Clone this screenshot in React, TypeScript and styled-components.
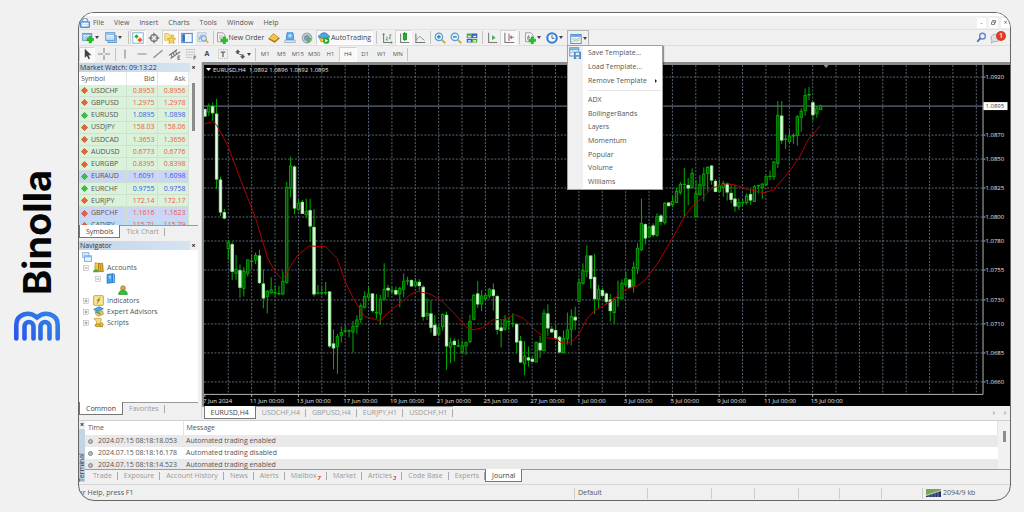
import React from "react";
import styled, { createGlobalStyle, css } from "styled-components";

const UI_FONT = '"Open Sans", "Noto Sans", sans-serif';

const GlobalStyle = createGlobalStyle`
  * { box-sizing: border-box; }
  body { margin: 0; background: #f1f1f1; font-family: ${UI_FONT}; font-size: 7px; line-height: 10px; color: #555; }
  button, input { font: inherit; color: inherit; }
  button { margin: 0; padding: 0; border: 0; background: none; }
  table { border-collapse: collapse; border-spacing: 0; }
  ul { list-style: none; margin: 0; padding: 0; }
`;

/* ---------- page ---------- */

const Page = styled.div`
  display: flex;
  min-height: 100vh;
  padding: 12px 13px 11px 0;
`;

const Rail = styled.aside`
  flex: 0 0 78px;
  display: flex;
  flex-direction: column;
  align-items: center;
  gap: 15px;
  padding: 158px 4px 0 0;
`;

const BrandName = styled.div`
  writing-mode: vertical-rl;
  transform: rotate(180deg);
  font-family: Inter, "Liberation Sans", sans-serif;
  font-weight: 700;
  font-size: 38px;
  line-height: 48px;
  color: #050505;
`;

const Window = styled.main`
  flex: 1;
  min-width: 0;
  display: flex;
  flex-direction: column;
  border: 1px solid #666;
  border-radius: 16px;
  background: #f0f0f0;
  overflow: hidden;
`;

/* ---------- menu bar ---------- */

const MenuBar = styled.nav`
  display: flex;
  align-items: center;
  height: 17px;
  padding-left: 1px;
  border-top: 3px solid #fff;
  border-bottom: 1px solid #e2e2e2;
`;

const MenuItems = styled.div`
  display: flex;
  gap: 10px;
  flex: 1;
  padding-left: 3px;
`;

const WindowControls = styled.div`
  display: flex;
  gap: 3px;
`;

const WindowButton = styled.button`
  width: 9px;
  height: 10px;
  background: #fff;
  color: #667;
  font-size: 7px;
  line-height: 9px;
`;

/* ---------- toolbars ---------- */

const ToolBar = styled.div`
  display: flex;
  align-items: center;
  height: 16px;
  &:first-of-type { border-bottom: 1px solid #dedede; }
`;

const ToolButton = styled.button<{ $w?: number; $pressed?: boolean }>`
  flex: none;
  display: flex;
  align-items: center;
  justify-content: center;
  gap: 1px;
  width: ${(p) => p.$w ?? 16}px;
  height: 15px;
  color: #444;
  white-space: nowrap;
  ${(p) =>
    p.$pressed &&
    css`
      background: #f9f9f9;
      border: 1px solid #d4d4d4;
      border-right-color: #fff;
      border-bottom-color: #fff;
    `}
`;

const ToolGap = styled.span<{ $w?: number; $line?: boolean }>`
  flex: none;
  width: ${(p) => p.$w ?? 4}px;
  height: 13px;
  background: ${(p) => (p.$line ? "linear-gradient(#c4c4c4, #c4c4c4) center / 1px 100% no-repeat" : "none")};
`;

const Periods = styled.div`
  display: flex;
  width: 149px;
`;

const PeriodButton = styled.button<{ $pressed?: boolean }>`
  flex: 1;
  height: 15px;
  font-size: 6px;
  color: #555;
  ${(p) =>
    p.$pressed &&
    css`
      background: #f9f9f9;
      border: 1px solid #d0d0d0;
      border-right-color: #fff;
      border-bottom-color: #fff;
    `}
`;

const Spacer = styled.span`
  flex: 1;
`;

const MenuAnchor = styled.div`
  position: relative;
  align-self: stretch;
  border: 1px solid #b5b5b5;
  border-bottom: 0;
`;

const DropMenu = styled.div`
  position: absolute;
  z-index: 2;
  top: 14px;
  left: -1px;
  width: 96px;
  height: 145px;
  border: 1px solid #a0a0a0;
  background: linear-gradient(90deg, #f0f0f0 15px, #fff 15px);
  box-shadow: 1px 1px 1px rgba(0, 0, 0, 0.4);
`;

const MenuGroup = styled.div<{ $h: number }>`
  display: flex;
  flex-direction: column;
  height: ${(p) => p.$h}px;
`;

const MenuRow = styled.button`
  flex: 1;
  display: flex;
  align-items: center;
  padding-right: 5px;
  text-align: left;
`;

const MenuIcon = styled.span`
  display: flex;
  width: 20px;
  padding-left: 1px;
`;

const MenuLabel = styled.span`
  flex: 1;
`;

const MenuRule = styled.hr`
  height: 1px;
  margin: 2px 1px 2px 20px;
  border: 0;
  background: #e4e4e4;
`;

/* ---------- work area ---------- */

const Work = styled.div`
  flex: 1;
  display: flex;
  min-height: 357px;
`;

const SidePanels = styled.div`
  flex: 0 0 122px;
  display: flex;
  flex-direction: column;
  padding: 1px 3px 0 0;
  border-right: 1px solid #d8d8d8;
`;

const Panel = styled.section<{ $grow?: boolean }>`
  display: flex;
  flex-direction: column;
  ${(p) => p.$grow && "flex: 1;"}
`;

const PanelTitle = styled.header`
  display: flex;
  height: 9px;
  line-height: 9px;
  font-size: 7px;
  color: #333;
`;

const PanelName = styled.h2`
  flex: 1;
  margin: 0;
  padding-left: 1px;
  font: inherit;
  background: linear-gradient(90deg, #c2d4e5, #d6e4f1);
`;

const PanelClose = styled.button`
  width: 8px;
  line-height: 8px;
  font-size: 7px;
  font-weight: 700;
  color: #222;
`;

const WatchBody = styled.div`
  display: flex;
  height: 153px;
  overflow: hidden;
  background: #f3f3f3;
`;

const WatchTable = styled.table`
  width: 109px;
  height: 160px;
  flex: none;
  table-layout: fixed;
  background: #fff;
`;

const WatchHead = styled.th<{ $w: number; $right?: boolean }>`
  width: ${(p) => p.$w}px;
  height: 13px;
  padding: 0 2px;
  font-weight: 400;
  text-align: ${(p) => (p.$right ? "right" : "left")};
  border-right: 1px solid #e6e6e6;
`;

const rowTint = { green: "#d9f2d9", blue: "#ccd5f5", sky: "#b9dcf7" };

const WatchRow = styled.tr<{ $tint: keyof typeof rowTint }>`
  background: ${(p) => rowTint[p.$tint]};
  border-bottom: 1px solid #cfe0d0;
`;

const WatchCell = styled.td<{ $tone?: "up" | "down" }>`
  padding: 0 2px;
  line-height: 10px;
  white-space: nowrap;
  border-right: 1px solid #cfe3d0;
  ${(p) =>
    p.$tone &&
    css`
      text-align: right;
      color: ${p.$tone === "up" ? "#3d55f0" : "#ee5a45"};
    `}
`;

const SymbolCell = styled.span`
  display: flex;
  align-items: center;
  gap: 3px;
`;

const ScrollTrack = styled.div<{ $w: number; $top: number }>`
  flex: 0 0 ${(p) => p.$w}px;
  display: flex;
  justify-content: center;
  align-items: flex-start;
  padding-top: ${(p) => p.$top}px;
  background: #f1f1f1;
`;

const ScrollThumb = styled.div<{ $h: number }>`
  width: 3px;
  height: ${(p) => p.$h}px;
  background: #8c8c8c;
`;

const TabStrip = styled.div<{ $inset?: number; $h: number }>`
  display: flex;
  align-items: flex-start;
  height: ${(p) => p.$h}px;
  padding-left: ${(p) => p.$inset ?? 0}px;
  border-top: 1px solid #9a9a9a;
`;

const Tab = styled.button<{ $active?: boolean }>`
  display: flex;
  align-items: center;
  height: 13px;
  margin-top: -1px;
  padding: 1px 6px 0;
  color: #999;
  white-space: nowrap;
  &::after {
    content: "";
    width: 1px;
    height: 8px;
    margin-right: -6px;
    margin-left: 5px;
    background: #aaa;
  }
  ${(p) =>
    p.$active &&
    css`
      background: #fff;
      color: #444;
      border: 1px solid #777;
      border-top: 0;
      &::after {
        display: none;
      }
    `}
`;

const Unread = styled.sub`
  align-self: flex-end;
  margin-left: 1px;
  font-size: 6px;
  line-height: 8px;
  font-style: italic;
  font-weight: 700;
  color: #f04040;
`;

const TreeBody = styled.div`
  flex: 1;
  padding: 1px 3px 0;
  background: #fff;
`;

const TreeRow = styled.li<{ $indent: number }>`
  display: flex;
  align-items: center;
  gap: 3px;
  height: 11px;
  padding-left: ${(p) => p.$indent}px;
`;

/* ---------- chart ---------- */

const ChartPane = styled.section`
  flex: 1;
  min-width: 0;
  display: flex;
  flex-direction: column;
`;

const ChartFrame = styled.div`
  flex: 1;
  display: flex;
  border-top: 3px solid #8a8a8a;
  border-left: 2px solid #8a8a8a;
  background: #000;
`;

const ChartSvg = styled.svg`
  display: block;
  width: 100%;
  height: 100%;
  font-family: ${UI_FONT};
  font-size: 6px;
`;

const ChartTabs = styled.div`
  display: flex;
  align-items: center;
  justify-content: space-between;
  height: 13px;
  padding-right: 2px;
`;

const TabArrows = styled.div`
  display: flex;
  gap: 9px;
  padding-right: 2px;
`;

/* ---------- terminal ---------- */

const Terminal = styled.section`
  display: flex;
  height: 64px;
  margin-top: 1px;
  border-top: 1px solid #d0d0d0;
`;

const TerminalHandle = styled.div`
  flex: 0 0 6px;
  width: 6px;
  display: flex;
  flex-direction: column;
`;

const HandleClose = styled(PanelClose)`
  width: 6px;
`;

const TerminalTitle = styled.h2`
  flex: 1;
  margin: 0 0 2px;
  font: inherit;
  line-height: 6px;
  color: #333;
  writing-mode: vertical-rl;
  transform: rotate(180deg);
  background: #c2d4e5;
`;

const TerminalMain = styled.div`
  flex: 1;
  min-width: 0;
  display: flex;
  flex-direction: column;
`;

const LogView = styled.div`
  display: flex;
  height: 48px;
  overflow: hidden;
`;

const LogTable = styled.table`
  flex: 1;
  table-layout: fixed;
  height: 50px;
  background: #fff;
`;

const LogHead = styled.th<{ $w?: number }>`
  height: 14px;
  padding: 0 3px;
  font-weight: 400;
  text-align: left;
  ${(p) => p.$w && `width: ${p.$w}px;`}
  border-right: 1px solid #e4e4e4;
`;

const LogRow = styled.tr`
  height: 12px;
  &:nth-child(odd) { background: #e9e9e9; }
`;

const LogCell = styled.td`
  padding: 0 3px;
  white-space: nowrap;
`;

const LogTime = styled.span`
  display: flex;
  align-items: center;
  gap: 5px;
`;

const Dot = styled.i`
  width: 5px;
  height: 5px;
  border: 1px solid #888;
  border-radius: 50%;
  background: #bbb;
`;

/* ---------- status bar ---------- */

const StatusBar = styled.footer`
  display: flex;
  align-items: center;
  height: 16px;
  padding-top: 1px;
  border-top: 1px solid #d4d4d4;
`;

const StatusHelp = styled.span`
  flex: 1;
  text-indent: -4px;
`;

const StatusCell = styled.span<{ $w: number }>`
  flex: 0 0 ${(p) => p.$w}px;
  display: flex;
  align-items: center;
  gap: 2px;
  height: 11px;
  padding-left: 3px;
  border-left: 1px solid #ccc;
`;

/* ---------- icons ---------- */

const Svg = ({ s = 12, children }: { s?: number; children: React.ReactNode }) => (
  <svg width={s} height={s} viewBox="0 0 16 16" fill="none" aria-hidden="true">
    {children}
  </svg>
);

const Caret = () => (
  <svg width="4" height="3" viewBox="0 0 4 3" aria-hidden="true">
    <path d="M0 0h4L2 3z" fill="#444" />
  </svg>
);

const Plus = ({ x = 0, y = 0 }: { x?: number; y?: number }) => (
  <path transform={`translate(${x} ${y})`} d="M3 0h3v3h3v3H6v3H3V6H0V3h3z" fill="#22c822" stroke="#12a012" strokeWidth=".8" />
);

const icons: Record<string, React.ReactNode> = {
  app: (
    <>
      <path d="M4 7V4a4 4 0 0 1 8 0v3" stroke="#79a7de" strokeWidth="2" />
      <rect x="1" y="6" width="14" height="9" rx="1" fill="#cfe2f7" stroke="#4d8ad0" strokeWidth="2" />
      <path d="M4 9h8M4 12h5" stroke="#fff" strokeWidth="1.500" />
    </>
  ),
  newChart: (
    <>
      <rect x="1" y="2" width="12" height="9" fill="#d3e6f7" stroke="#5d97cf" strokeWidth="1.400" />
      <path d="M2 3h10" stroke="#6ea7dc" strokeWidth="1.500" />
      <path d="M3 9l3-3 2 2 3-2" stroke="#5d93c8" />
      <Plus x={6.5} y={5.5} />
    </>
  ),
  profiles: (
    <>
      <rect x="4" y="5" width="11" height="9" fill="#a9cdf0" stroke="#5a93cb" strokeWidth="1.200" />
      <rect x="1" y="1" width="12" height="10" fill="#e1effb" stroke="#5a95d0" strokeWidth="1.400" />
      <path d="M2 3h10" stroke="#8cb9e6" strokeWidth="2" />
      <path d="M3 6.500h8M3 8.500h8" stroke="#b3cfea" />
    </>
  ),
  watch: (
    <>
      <rect x="1" y="1" width="14" height="14" fill="#fff" stroke="#8ab6df" strokeWidth="1.400" />
      <path d="M6 3l3 3-3 3-3-3z" fill="#24b32a" />
      <path d="M10.500 7l3.500 3.500-3.500 3.500L7 10.500z" fill="#ee5a36" />
    </>
  ),
  target: (
    <>
      <circle cx="8" cy="8" r="4.500" stroke="#777" strokeWidth="1.800" />
      <path d="M8 1v5M8 10v5M1 8h5M10 8h5" stroke="#777" strokeWidth="1.800" />
    </>
  ),
  navigator: (
    <>
      <path d="M1 2h5l1 2h6v7H1z" fill="#f9e48b" stroke="#dab543" />
      <path d="M10 5l1.700 3.500 4 .500-3 2.600.800 3.900L10 13.600 6.500 15.500l.800-3.900-3-2.600 4-.500z" fill="#fbd549" stroke="#c3951a" strokeWidth=".8" />
    </>
  ),
  terminal: (
    <>
      <rect x="1" y="2" width="14" height="12" fill="#f7fbff" stroke="#5a93cc" strokeWidth="1.600" />
      <path d="M3.500 3v10" stroke="#2f6fb5" strokeWidth="3.500" />
      <path d="M7 6h6M7 9h6" stroke="#dfe9f3" />
    </>
  ),
  tester: (
    <>
      <rect x="1" y="1" width="11" height="12" fill="#dbe9f6" stroke="#a9bed5" />
      <path d="M3 11V6M5 9V4M7 11V3M9 8V4" stroke="#8396ab" />
      <circle cx="9" cy="8.500" r="3.500" fill="#cfe6f8" stroke="#6f98c0" strokeWidth="1.300" />
      <path d="M12 11l3 3.500" stroke="#e0aa3d" strokeWidth="2" />
    </>
  ),
  order: (
    <>
      <path d="M2 1h7l3 3v9H2z" fill="#f6f6f6" stroke="#888" />
      <path d="M4 5h5M4 7h5M4 9h3" stroke="#aaa" />
      <Plus x={6.5} y={6.5} />
    </>
  ),
  book: (
    <>
      <path d="M1 9l6-7 8 6-6 6z" fill="#f1c54c" stroke="#bb8524" />
      <path d="M1 9l8 4 6-5" stroke="#a9741a" strokeWidth="1.500" />
    </>
  ),
  server: (
    <>
      <path d="M4 1h8l1 9H3z" fill="#5db0f0" stroke="#2f7fcb" />
      <path d="M6 3h4v4H6z" fill="#b3e0ff" />
      <path d="M1 11h14v3H1z" fill="#e0e7ef" stroke="#8fa5bd" />
    </>
  ),
  signal: (
    <>
      <circle cx="8" cy="8" r="6.500" fill="#c9d0d6" stroke="#9aa3aa" strokeWidth="1.400" />
      <circle cx="8" cy="8" r="3.500" fill="#7c9fba" stroke="#6f8da3" />
      <path d="M8 8l6 0-2 5-4 2z" fill="#58b558" />
    </>
  ),
  auto: (
    <>
      <path d="M1 6c4 4 9 4 14 0l-3 7H4z" fill="#f3cf3c" stroke="#b78d14" />
      <path d="M0 6c3-2 4-5 8-5s5 3 8 5c-5 3-11 3-16 0z" fill="#52a5dd" stroke="#2c79b3" />
      <circle cx="11" cy="11.500" r="4.200" fill="#23ab34" />
      <path d="M9.500 9.300l4 2.200-4 2.200z" fill="#fff" />
    </>
  ),
  bars: (
    <>
      <path d="M3.500 2v12H15" stroke="#777" strokeWidth="1.400" />
      <path d="M2 4l1.500-2L5 4M13 12.500l2 1.500-2 1.500" stroke="#777" />
      <path d="M8 6v6M6.500 10H8M12 3v7M12 4h2M10.500 8H12" stroke="#5aa268" strokeWidth="1.300" />
    </>
  ),
  candles: (
    <>
      <path d="M3.500 2v12H15" stroke="#777" strokeWidth="1.400" />
      <path d="M9 0v12" stroke="#0f8c1c" strokeWidth="1.300" />
      <rect x="7" y="2" width="4.500" height="8" fill="#19b52c" stroke="#0f8c1c" />
    </>
  ),
  line: (
    <>
      <path d="M2.500 2v12H15" stroke="#777" strokeWidth="1.400" />
      <path d="M3 11c3-5 5-6 7-3l4 3" stroke="#69a675" strokeWidth="1.300" />
    </>
  ),
  zoomIn: (
    <>
      <path d="M10 10l5 5" stroke="#dfae37" strokeWidth="2.800" />
      <circle cx="6.500" cy="6.500" r="5" fill="#d7eefb" stroke="#5a9ed3" strokeWidth="1.600" />
      <path d="M6.500 4v5M4 6.500h5" stroke="#2b74b8" strokeWidth="1.500" />
    </>
  ),
  zoomOut: (
    <>
      <path d="M10 10l5 5" stroke="#dfae37" strokeWidth="2.800" />
      <circle cx="6.500" cy="6.500" r="5" fill="#d7eefb" stroke="#5a9ed3" strokeWidth="1.600" />
      <path d="M4 6.500h5" stroke="#2b74b8" strokeWidth="1.500" />
    </>
  ),
  tile: (
    <>
      <path d="M1 2h7v6H1zM8 9h7v5H8z" fill="#49a93a" />
      <path d="M8 2h7v6H8zM1 9h7v5H1z" fill="#2d61be" />
      <path d="M2.500 5h4v2h-4zM9.500 5h4v2h-4zM2.500 11h4v2h-4zM9.500 11h4v2h-4z" fill="#e6f1fb" />
    </>
  ),
  scroll: (
    <>
      <path d="M3.500 1v13H15" stroke="#777" strokeWidth="1.400" />
      <path d="M8 4l5 3.500L8 11z" fill="#4fb35a" />
    </>
  ),
  shift: (
    <>
      <path d="M2.500 1v13H15M8 2v10" stroke="#777" strokeWidth="1.400" />
      <path d="M14.500 7h-4m1.500-2L9.500 7 12 9" stroke="#e0654c" strokeWidth="1.400" />
    </>
  ),
  indicators: (
    <>
      <path d="M2 1h7l3 3v9H2z" fill="#f6f6f6" stroke="#888" />
      <path d="M7 4c-2 0-1 7-3 7M4 7h4" stroke="#666" />
      <Plus x={6.5} y={6.5} />
    </>
  ),
  clock: (
    <>
      <circle cx="8" cy="8" r="6.300" fill="#f4faff" stroke="#2e7fd6" strokeWidth="2.800" />
      <path d="M8 4v4.500h3" stroke="#456" strokeWidth="1.200" />
    </>
  ),
  template: (
    <>
      <rect x="1" y="2" width="14" height="12" fill="#f2f8fd" stroke="#5a97d2" strokeWidth="1.400" />
      <path d="M1.500 4h13" stroke="#6caae2" strokeWidth="2.500" />
      <path d="M3 8.500l3-1 3 1 4-2" stroke="#d58b78" />
      <path d="M3 12l3-2 3 1 4-2" stroke="#6bb57c" />
    </>
  ),
  saveTemplate: (
    <>
      <rect x="1" y="1" width="12" height="11" fill="#f2f8fd" stroke="#5a97d2" strokeWidth="1.400" />
      <path d="M1 3h12" stroke="#6caae2" strokeWidth="2.500" />
      <path d="M2.500 8l3-2 2 2 3-2" stroke="#d0664c" />
      <rect x="7" y="7" width="8.500" height="8.500" fill="#5f98d2" stroke="#3f78b5" />
      <path d="M9 7.500h4.500v3H9zM9.500 13h4v2.500h-4z" fill="#e4effa" />
    </>
  ),
  cursor: <path d="M5 1v12l3-2.500 2 4.500 2-1-2-4.500h4z" fill="#444" />,
  cross: <path d="M8 0v6.500M8 9.500V16M0 8h6.500M9.500 8H16" stroke="#888" strokeWidth="1.500" />,
  vline: <path d="M8 2v12" stroke="#888" strokeWidth="1.500" />,
  hline: <path d="M2 8h12" stroke="#888" strokeWidth="1.500" />,
  trend: <path d="M2 13L14 3" stroke="#888" strokeWidth="1.500" />,
  channel: (
    <>
      <path d="M0 10L11 2M2 14L15 5M3 8l1 5M6 6l1 5M9 4l1 5" stroke="#777" strokeWidth="1.400" />
      <path d="M15 10.500h-3v5h3M12 13h2.500" stroke="#555" />
    </>
  ),
  fibo: (
    <>
      <path d="M1 2h13M1 5.500h13M1 9h13M1 12.500h8" stroke="#999" strokeDasharray="1.500 .7" />
      <path d="M12 15.500V11h3M12 13h2.500" stroke="#555" />
    </>
  ),
  label: (
    <>
      <rect x="2" y="2" width="12" height="12" stroke="#aaa" strokeDasharray="1.500 1.500" />
      <path d="M5 5.500h6M8 5.500V12" stroke="#666" strokeWidth="1.700" />
    </>
  ),
  shapes: (
    <>
      <path d="M5 2l3.500 3.500h-2V8h-3V5.500h-2zM11.500 14.500L8 11h2V8.500h3V11h2z" fill="#555" />
      <path d="M7 8.500l3 .5" stroke="#555" strokeWidth="1.300" />
    </>
  ),
  search: (
    <>
      <circle cx="10" cy="5.500" r="3.800" fill="#eaf1fb" stroke="#5f84cc" strokeWidth="1.800" />
      <path d="M7 8.500L3 13" stroke="#4a6ab3" strokeWidth="2.500" />
    </>
  ),
  chat: <path d="M7 3a6 5 0 1 1-2.500 9.500L2 15l.5-4A5.500 5 0 0 1 7 3z" fill="#e0e0e4" stroke="#a5a5ad" strokeWidth="1.200" />,
  down: <path d="M8 1l7 7-7 7-7-7z" fill="#ee6036" stroke="#b8462a" strokeWidth="1.500" />,
  up: <path d="M8 1l7 7-7 7-7-7z" fill="#38c243" stroke="#2a8f34" strokeWidth="1.500" />,
  windows: (
    <>
      <rect x="1" y="1" width="10" height="8" fill="#dcebf9" stroke="#7fb0e0" strokeWidth="1.400" />
      <rect x="4" y="6" width="11" height="9" fill="#e8f2fc" stroke="#6fa6dc" strokeWidth="1.400" />
      <path d="M4 7.500h11" stroke="#7fb6ea" strokeWidth="2" />
    </>
  ),
  accounts: (
    <>
      <path d="M3 1l6 1v11l-6-2z" fill="#f5cf3f" stroke="#b48c20" />
      <path d="M8 2h6l1 12H8z" fill="#e3b431" stroke="#8f680a" />
      <path d="M11 3v10" stroke="#a87f14" />
      <circle cx="4" cy="8" r="2" fill="#e9ad51" />
      <path d="M0 15c0-6 8-6 8 0z" fill="#37b53a" />
    </>
  ),
  device: (
    <>
      <path d="M3 2l8-1v13l-8 1z" fill="#3ba0ea" stroke="#1a6db8" />
      <path d="M11 1l3 1v12l-3 0z" fill="#7cc4f7" stroke="#1a6db8" />
      <path d="M5.500 5h3M5.500 7.500h3" stroke="#e3f4ff" strokeWidth="1.300" />
    </>
  ),
  user: (
    <>
      <circle cx="8" cy="5" r="3.800" fill="#e3a447" stroke="#9a6714" />
      <path d="M1 15c0-9 14-9 14 0z" fill="#35bf38" stroke="#178a1c" />
    </>
  ),
  indicatorTree: (
    <>
      <rect x="1" y="1" width="14" height="14" rx="1" fill="#f9e795" stroke="#c9a22c" strokeWidth="1.400" />
      <path d="M10.500 4c-3-.500-2 8-5 8M5.500 7.500h4.500" stroke="#7d6416" strokeWidth="1.300" />
    </>
  ),
  advisor: (
    <>
      <path d="M1 5l8-4 6 3-7 4z" fill="#4fa8dc" stroke="#24709f" />
      <path d="M3 8c4 2 7 1 11-1l1 5-7 3-4-3z" fill="#f0cd50" stroke="#ac8419" />
      <path d="M4 8l7 4" stroke="#2f86bb" strokeWidth="1.800" />
    </>
  ),
  script: (
    <>
      <path d="M2 2h9c2 0 0 4 0 8H5C6 6 4 4 2 4z" fill="#f6dc7d" stroke="#b8922b" />
      <path d="M3 11h9l2 3H6c-2 0-4-1-3-3z" fill="#eabf3a" stroke="#a47c12" />
      <circle cx="12.500" cy="11" r="2.500" fill="#f2c838" stroke="#9a7410" strokeWidth=".8" />
    </>
  ),
  expanded: (
    <>
      <rect x="3" y="3" width="10" height="10" fill="#fafafa" stroke="#aaa" />
      <path d="M5 8h6" stroke="#666" strokeWidth="1.200" />
    </>
  ),
  collapsed: (
    <>
      <rect x="3" y="3" width="10" height="10" fill="#fafafa" stroke="#aaa" />
      <path d="M5 8h6M8 5v6" stroke="#666" strokeWidth="1.200" />
    </>
  ),
};

const Icon = ({ name, s }: { name: string; s?: number }) => <Svg s={s}>{icons[name]}</Svg>;

const BadgeHost = styled.button`
  position: relative;
  width: 20px;
  height: 15px;
  display: flex;
  align-items: center;
`;

const Badge = styled.span`
  position: absolute;
  top: 1px;
  left: 6px;
  width: 10px;
  height: 10px;
  border-radius: 50%;
  background: #df3a22;
  color: #fff;
  font-size: 7px;
  font-weight: 600;
  line-height: 10px;
  text-align: center;
`;

const BrandMark = () => (
  <svg width="48" height="32" viewBox="0 0 48 32" fill="none" aria-label="Binolla logo">
    <defs>
      <linearGradient id="mark" x1="0" y1="32" x2="30" y2="0" gradientUnits="userSpaceOnUse">
        <stop offset="0" stopColor="#2b50e8" />
        <stop offset="1" stopColor="#2f7fe6" />
      </linearGradient>
    </defs>
    <path
      d="M3.300 28.500V15C3.300 4 16 .5 24 7.500 32 .5 44.700 4 44.700 15v13.500M11.500 28.500V16.500a4.500 4.500 0 0 1 9 0v12M27.500 28.500V16.500a4.500 4.500 0 0 1 9 0v12"
      stroke="url(#mark)"
      strokeWidth="4.600"
      strokeLinecap="round"
    />
  </svg>
);

/* ---------- chart data ---------- */

// Each bar: high, body top, body bottom, low, kind (u = up, d = down, n = flat).
const BARS = `146 148 168 170 d|130 138 156 168 u|127 140 158 182 d|116 162 357 387 d|350 360 456 468 d|447 458 474 478 d|540 548 566 600 u|546 554 634 660 d|585 628 640 660 u|613 632 682 714 d|622 634 685 710 u|598 600 640 650 u|585 603 605 625 n|578 586 600 612 u|569 588 668 672 d|628 672 714 745 d|690 694 710 760 u|652 690 698 702 u|675 697 700 710 n|678 700 703 706 n|634 664 702 706 u|366 382 667 672 u|290 318 384 412 u|315 321 444 462 d|418 430 448 452 u|420 427 460 462 d|416 454 464 475 u|416 452 498 545 d|447 502 702 710 d|675 698 700 704 n|680 698 701 706 n|666 697 700 706 n|694 696 858 864 d|808 852 864 928 d|822 830 860 942 u|800 818 826 848 u|794 812 815 820 n|808 812 815 832 n|783 800 816 878 u|766 780 800 822 u|730 738 778 790 u|694 710 742 746 u|680 702 712 720 u|700 702 752 758 d|702 757 760 776 n|705 718 762 794 u|610 688 718 722 u|675 685 690 712 d|680 692 695 700 n|680 692 702 706 d|680 686 702 742 u|640 664 688 712 u|650 662 667 675 n|658 662 678 680 d|654 666 676 680 u|657 667 677 692 d|676 682 770 782 d|715 760 767 780 u|720 762 802 818 d|765 796 826 828 d|798 804 822 828 u|760 764 800 812 u|755 766 858 930 d|834 848 862 910 u|835 844 854 904 d|838 857 859 862 n|842 858 876 882 u|845 848 858 885 u|765 784 845 850 u|702 706 778 782 u|663 702 732 744 d|690 708 732 754 u|702 706 716 722 u|684 688 708 716 u|670 690 706 752 d|704 710 808 824 d|778 804 812 862 d|765 780 808 812 u|772 784 788 810 n|760 790 792 802 n|788 794 846 880 d|828 844 906 910 d|844 888 912 946 u|860 894 900 920 d|890 898 904 906 d|845 848 906 908 u|828 850 870 894 d|748 760 872 874 u|733 762 804 828 d|798 808 816 820 d|794 812 836 838 d|828 832 876 880 d|812 836 878 880 u|758 810 836 854 u|748 770 808 856 u|740 772 780 810 d|655 668 724 726 u|610 632 670 674 u|556 588 634 652 u|586 588 656 686 d|582 652 716 762 d|675 688 718 744 u|684 692 706 710 d|697 702 724 732 d|702 720 752 785 d|712 718 758 792 u|662 712 716 740 n|658 670 716 718 u|635 656 674 680 u|658 660 682 685 d|605 622 678 698 u|550 565 625 642 u|416 490 569 573 u|490 494 534 554 d|496 502 530 532 u|490 498 524 532 d|460 470 526 530 u|462 468 484 496 d|426 430 488 494 u|426 429 437 439 d|408 424 434 442 u|384 394 427 430 u|366 373 397 404 u|324 372 376 472 n|354 376 384 436 d|325 340 382 386 u|360 400 470 472 u|345 374 404 406 u|322 342 376 424 u|318 322 340 394 u|315 318 360 374 d|357 364 394 397 d|358 378 394 398 u|362 370 382 410 u|367 372 396 422 d|372 400 418 430 d|374 417 438 455 d|415 428 440 450 u|418 427 431 436 n|400 408 428 434 u|387 404 420 434 d|375 380 424 426 u|374 376 380 400 n|370 372 382 416 u|345 350 374 378 u|332 348 352 360 n|303 306 350 360 u|123 166 310 324 u|123 168 240 252 d|225 236 240 266 n|210 228 244 248 u|220 226 230 252 n|165 170 226 257 u|145 154 172 215 u|85 106 152 167 u|80 103 106 120 n|125 128 164 182 d|138 144 160 173 u|134 138 148 150 u`
  .split("|")
  .map((bar) => {
    const [high, top, bottom, low, kind] = bar.split(" ");
    return { high: +high, top: +top, bottom: +bottom, low: +low, kind };
  });

const AVERAGE =
  "11,191 35,185 47,195 82,260 120,362 164,475 200,594 222,634 240,655 250,650 269,618 290,586 325,558 374,560 409,596 433,666 460,720 491,770 538,782 573,748 600,728 630,702 650,694 690,703 725,725 760,760 795,800 818,810 845,803 875,780 910,778 942,764 970,776 1000,808 1032,833 1065,836 1080,847 1100,850 1120,840 1135,820 1160,775 1180,753 1230,725 1275,688 1310,678 1333,660 1370,612 1415,535 1450,472 1472,442 1500,418 1535,384 1575,371 1600,374 1640,388 1690,398 1718,390 1760,342 1795,294 1822,240 1859,196";

const PRICES: [number, string][] = [
  [12, "1.0920"], [70, "1.0870"], [94, "1.0850"], [123, "1.0825"], [152, "1.0800"], [176, "1.0780"],
  [205, "1.0755"], [235, "1.0730"], [259, "1.0710"], [288, "1.0685"], [317, "1.0660"],
];

const DATES = [
  "7 Jun 2024", "11 Jun 00:00", "13 Jun 00:00", "17 Jun 00:00", "19 Jun 00:00", "21 Jun 00:00", "25 Jun 00:00",
  "27 Jun 00:00", "1 Jul 00:00", "3 Jul 00:00", "5 Jul 00:00", "9 Jul 00:00", "11 Jul 00:00", "15 Jul 00:00",
];

const GRID_STEP = 23.39;

const PriceChart = () => (
  <ChartSvg viewBox="0 0 807 341" role="img" aria-label="EURUSD, H4 candlestick chart">
    <g stroke="#596776" strokeWidth="1" strokeDasharray="2 1.500">
      {Array.from({ length: 33 }, (_, i) => (
        <line key={i} x1={24.3 + i * GRID_STEP} x2={24.3 + i * GRID_STEP} y1="0" y2="329" />
      ))}
      {PRICES.map(([y]) => (
        <line key={y} x1="0" x2="779" y1={y} y2={y} />
      ))}
    </g>
    <path d="M0 41H780" stroke="#414d59" strokeWidth="1.800" />
    <g transform="translate(-3 -5) scale(.33333)">
      {BARS.map((bar, i) => {
        const x = 11.7 + i * 11.7;
        return (
          <g key={i} stroke="#00b000" strokeWidth="3">
            <line x1={x} x2={x} y1={bar.high} y2={bar.low} />
            {bar.kind === "n" ? (
              <line x1={x - 5} x2={x + 5} y1={bar.top + 1} y2={bar.top + 1} strokeWidth="4" />
            ) : (
              <rect
                x={x - 3.5}
                y={bar.top}
                width="7"
                height={bar.bottom - bar.top}
                fill={bar.kind === "u" ? "#004600" : "#e6ffe6"}
                stroke={bar.kind === "u" ? "#00a400" : "#a0eca0"}
              />
            )}
          </g>
        );
      })}
      <polyline points={AVERAGE} fill="none" stroke="#b00000" strokeWidth="3" />
    </g>
    <path d="M779.500 0V329.500H0" fill="none" stroke="#b4b4b4" />
    <path d="M620 0h5l-2.500 3z" fill="#8796a5" />
    <path d="M2 3h5l-2.500 3z" fill="#fff" />
    <g fill="#e4e4e4">
      <text x="9" y="7">EURUSD,H4</text>
      <text x="45" y="7">1.0892 1.0896 1.0892 1.0895</text>
      {PRICES.map(([y, label]) => (
        <text key={label} x="782" y={y + 2}>{label}</text>
      ))}
      {DATES.map((label, i) => (
        <text key={label} x={i * 46.78 - 1} y="338">{label}</text>
      ))}
    </g>
    <g stroke="#b4b4b4">
      {DATES.map((label, i) => (
        <line key={label} x1={0.9 + i * 46.78} x2={0.9 + i * 46.78} y1="329" y2="332" />
      ))}
      {PRICES.map(([y]) => (
        <line key={y} x1="780" x2="782" y1={y} y2={y} />
      ))}
    </g>
    <rect x="780" y="37" width="24" height="8" fill="#fff" />
    <text x="782" y="43" fill="#444">1.0895</text>
  </ChartSvg>
);

/* ---------- content ---------- */

const QUOTES: [string, string, string, "up" | "down", keyof typeof rowTint][] = [
  ["USDCHF", "0.8953", "0.8956", "down", "green"],
  ["GBPUSD", "1.2975", "1.2978", "down", "green"],
  ["EURUSD", "1.0895", "1.0898", "up", "green"],
  ["USDJPY", "158.03", "158.06", "down", "green"],
  ["USDCAD", "1.3653", "1.3656", "down", "green"],
  ["AUDUSD", "0.6773", "0.6776", "down", "green"],
  ["EURGBP", "0.8395", "0.8398", "down", "green"],
  ["EURAUD", "1.6091", "1.6098", "up", "blue"],
  ["EURCHF", "0.9755", "0.9758", "up", "green"],
  ["EURJPY", "172.14", "172.17", "down", "green"],
  ["GBPCHF", "1.1616", "1.1623", "down", "blue"],
  ["CADJPY", "115.71", "115.79", "down", "sky"],
];

const LOG = [
  ["2024.07.15 08:18:18.053", "Automated trading enabled"],
  ["2024.07.15 08:18:16.178", "Automated trading disabled"],
  ["2024.07.15 08:18:14.523", "Automated trading enabled"],
];

const TERMINAL_TABS: [string, string?][] = [
  ["Trade"], ["Exposure"], ["Account History"], ["News"], ["Alerts"], ["Mailbox", "7"],
  ["Market"], ["Articles", "3"], ["Code Base"], ["Experts"], ["Journal"],
];

type ToolProps = { icon: string; w?: number; pressed?: boolean; caret?: boolean; label: string };

const Tool = ({ icon, w, pressed, caret, label }: ToolProps) => (
  <ToolButton type="button" $w={w} $pressed={pressed} aria-label={label} aria-pressed={pressed}>
    <Icon name={icon} />
    {caret && <Caret />}
  </ToolButton>
);

const TemplateMenu = () => (
  <DropMenu role="menu">
    <MenuGroup $h={42}>
      <MenuRow role="menuitem" type="button">
        <MenuIcon><Icon name="saveTemplate" /></MenuIcon>
        <MenuLabel>Save Template...</MenuLabel>
      </MenuRow>
      <MenuRow role="menuitem" type="button">
        <MenuIcon />
        <MenuLabel>Load Template...</MenuLabel>
      </MenuRow>
      <MenuRow role="menuitem" type="button">
        <MenuIcon />
        <MenuLabel>Remove Template</MenuLabel>
        <svg width="2" height="4" viewBox="0 0 2 4" aria-hidden="true"><path d="M0 0l2 2-2 2z" fill="#222" /></svg>
      </MenuRow>
    </MenuGroup>
    <MenuRule />
    <MenuGroup $h={96}>
      {["ADX", "BollingerBands", "Layers", "Momentum", "Popular", "Volume", "Williams"].map((name) => (
        <MenuRow key={name} role="menuitem" type="button">
          <MenuIcon />
          <MenuLabel>{name}</MenuLabel>
        </MenuRow>
      ))}
    </MenuGroup>
  </DropMenu>
);

const MarketWatch = () => (
  <Panel>
    <PanelTitle>
      <PanelName>Market Watch: 09:13:22</PanelName>
      <PanelClose type="button" aria-label="Close Market Watch">×</PanelClose>
    </PanelTitle>
    <WatchBody>
      <WatchTable>
        <thead>
          <tr>
            <WatchHead $w={47}>Symbol</WatchHead>
            <WatchHead $w={31} $right>Bid</WatchHead>
            <WatchHead $w={31} $right>Ask</WatchHead>
          </tr>
        </thead>
        <tbody>
          {QUOTES.map(([symbol, bid, ask, tone, tint]) => (
            <WatchRow key={symbol} $tint={tint}>
              <WatchCell>
                <SymbolCell><Icon name={tone} s={7} />{symbol}</SymbolCell>
              </WatchCell>
              <WatchCell $tone={tone}>{bid}</WatchCell>
              <WatchCell $tone={tone}>{ask}</WatchCell>
            </WatchRow>
          ))}
        </tbody>
      </WatchTable>
      <ScrollTrack $w={9} $top={11}><ScrollThumb $h={48} /></ScrollTrack>
    </WatchBody>
    <TabStrip $h={16}>
      <Tab type="button" $active>Symbols</Tab>
      <Tab type="button">Tick Chart</Tab>
    </TabStrip>
  </Panel>
);

const Navigator = () => (
  <Panel $grow>
    <PanelTitle>
      <PanelName>Navigator</PanelName>
      <PanelClose type="button" aria-label="Close Navigator">×</PanelClose>
    </PanelTitle>
    <TreeBody>
      <ul>
        <TreeRow $indent={0}><Icon name="windows" s={10} /></TreeRow>
        <TreeRow $indent={0}><Icon name="expanded" s={8} /><Icon name="accounts" s={11} />Accounts</TreeRow>
        <TreeRow $indent={12}><Icon name="expanded" s={8} /><Icon name="device" s={11} /></TreeRow>
        <TreeRow $indent={36}><Icon name="user" s={10} /></TreeRow>
        <TreeRow $indent={0}><Icon name="collapsed" s={8} /><Icon name="indicatorTree" s={11} />Indicators</TreeRow>
        <TreeRow $indent={0}><Icon name="collapsed" s={8} /><Icon name="advisor" s={11} />Expert Advisors</TreeRow>
        <TreeRow $indent={0}><Icon name="collapsed" s={8} /><Icon name="script" s={11} />Scripts</TreeRow>
      </ul>
    </TreeBody>
    <TabStrip $h={17}>
      <Tab type="button" $active>Common</Tab>
      <Tab type="button">Favorites</Tab>
    </TabStrip>
  </Panel>
);

export default function App() {
  return (
    <>
      <GlobalStyle />
      <Page>
        <Rail>
          <BrandName>Binolla</BrandName>
          <BrandMark />
        </Rail>
        <Window>
          <MenuBar>
            <Icon name="app" s={10} />
            <MenuItems>
              {["File", "View", "Insert", "Charts", "Tools", "Window", "Help"].map((item) => (
                <button key={item} type="button">{item}</button>
              ))}
            </MenuItems>
            <WindowControls>
              <WindowButton type="button" aria-label="Minimize">-</WindowButton>
              <WindowButton type="button" aria-label="Restore">
                <svg width="5" height="5" viewBox="0 0 10 10" fill="none" stroke="#667" strokeWidth="1.600" aria-hidden="true">
                  <path d="M3 3V1h6v5H7M1 4h6v5H1z" />
                </svg>
              </WindowButton>
              <WindowButton type="button" aria-label="Close">×</WindowButton>
            </WindowControls>
          </MenuBar>

          <ToolBar>
            <Tool icon="newChart" label="New chart" w={22} caret />
            <Tool icon="profiles" label="Profiles" w={25} caret />
            <ToolGap $line />
            <Tool icon="watch" label="Market Watch" pressed />
            <Tool icon="target" label="Data Window" />
            <Tool icon="navigator" label="Navigator" pressed />
            <Tool icon="terminal" label="Terminal" w={17} pressed />
            <Tool icon="tester" label="Strategy Tester" />
            <ToolGap $line />
            <ToolButton type="button" $w={50}><Icon name="order" />New Order</ToolButton>
            <Tool icon="book" label="MetaEditor" w={17} />
            <Tool icon="server" label="Hosting" />
            <Tool icon="signal" label="Signals" w={18} />
            <ToolButton type="button" $w={57} $pressed><Icon name="auto" />AutoTrading</ToolButton>
            <ToolGap $w={6} $line />
            <Tool icon="bars" label="Bar chart" />
            <Tool icon="candles" label="Candlesticks" w={17} pressed />
            <Tool icon="line" label="Line chart" />
            <ToolGap $line />
            <Tool icon="zoomIn" label="Zoom in" />
            <Tool icon="zoomOut" label="Zoom out" />
            <Tool icon="tile" label="Tile windows" />
            <ToolGap $line />
            <Tool icon="scroll" label="Auto scroll" />
            <Tool icon="shift" label="Chart shift" w={17} pressed />
            <ToolGap $line />
            <Tool icon="indicators" label="Indicators" w={22} caret />
            <Tool icon="clock" label="Periods" w={22} caret />
            <ToolGap $w={2} />
            <MenuAnchor>
              <ToolButton type="button" $w={20} aria-label="Templates" aria-haspopup="menu">
                <Icon name="template" />
                <Caret />
              </ToolButton>
              <TemplateMenu />
            </MenuAnchor>
            <Spacer />
            <Tool icon="search" label="Search" w={18} />
            <BadgeHost type="button" aria-label="Messages">
              <Icon name="chat" />
              <Badge>1</Badge>
            </BadgeHost>
          </ToolBar>

          <ToolBar>
            <Tool icon="cursor" label="Cursor" pressed />
            <Tool icon="cross" label="Crosshair" w={18} />
            <ToolGap $line />
            <Tool icon="vline" label="Vertical line" />
            <Tool icon="hline" label="Horizontal line" w={17} />
            <Tool icon="trend" label="Trendline" />
            <Tool icon="channel" label="Equidistant channel" w={17} />
            <Tool icon="fibo" label="Fibonacci" />
            <ToolButton type="button" $w={16} aria-label="Text"><b>A</b></ToolButton>
            <Tool icon="label" label="Text label" />
            <Tool icon="shapes" label="Arrows" w={22} caret />
            <ToolGap $line />
            <Periods>
              {["M1", "M5", "M15", "M30", "H1", "H4", "D1", "W1", "MN"].map((p) => (
                <PeriodButton key={p} type="button" $pressed={p === "H4"}>{p}</PeriodButton>
              ))}
            </Periods>
            <ToolGap $w={2} $line />
          </ToolBar>

          <Work>
            <SidePanels>
              <MarketWatch />
              <Navigator />
            </SidePanels>
            <ChartPane>
              <ChartFrame><PriceChart /></ChartFrame>
              <ChartTabs>
                <TabStrip $h={13} $inset={2}>
                  <Tab type="button" $active>EURUSD,H4</Tab>
                  <Tab type="button">USDCHF,H4</Tab>
                  <Tab type="button">GBPUSD,H4</Tab>
                  <Tab type="button">EURJPY,H1</Tab>
                  <Tab type="button">USDCHF,H1</Tab>
                </TabStrip>
                <TabArrows>
                  <button type="button" aria-label="Previous tabs">‹</button>
                  <button type="button" aria-label="Next tabs">›</button>
                </TabArrows>
              </ChartTabs>
            </ChartPane>
          </Work>

          <Terminal>
            <TerminalHandle>
              <HandleClose type="button" aria-label="Close Terminal">×</HandleClose>
              <TerminalTitle>Terminal</TerminalTitle>
            </TerminalHandle>
            <TerminalMain>
              <LogView>
                <LogTable>
                  <thead>
                    <tr>
                      <LogHead $w={98}>Time</LogHead>
                      <LogHead>Message</LogHead>
                    </tr>
                  </thead>
                  <tbody>
                    {LOG.map(([time, message]) => (
                      <LogRow key={time}>
                        <LogCell><LogTime><Dot />{time}</LogTime></LogCell>
                        <LogCell>{message}</LogCell>
                      </LogRow>
                    ))}
                  </tbody>
                </LogTable>
                <ScrollTrack $w={12} $top={10}><ScrollThumb $h={11} /></ScrollTrack>
              </LogView>
              <TabStrip $h={15} $inset={2}>
                {TERMINAL_TABS.map(([name, unread]) => (
                  <Tab key={name} type="button" $active={name === "Journal"}>
                    {name}
                    {unread && <Unread>{unread}</Unread>}
                  </Tab>
                ))}
              </TabStrip>
            </TerminalMain>
          </Terminal>

          <StatusBar>
            <StatusHelp>For Help, press F1</StatusHelp>
            <StatusCell $w={73}>Default</StatusCell>
            <StatusCell $w={64} />
            <StatusCell $w={43} />
            <StatusCell $w={44} />
            <StatusCell $w={41} />
            <StatusCell $w={42} />
            <StatusCell $w={41} />
            <StatusCell $w={88}>
              <svg width="15" height="8" viewBox="0 0 15 8" aria-hidden="true">
                <rect width="15" height="8" fill="#7da35a" />
                <path d="M0 8V7l15-5v6z" fill="#26366e" />
                <path d="M0 6.500L15 1.500" stroke="#dfe8d5" strokeWidth=".8" />
                <path d="M3 8V5M6 8V4M9 8V3M12 8V2" stroke="#9fb0cf" strokeWidth=".6" />
              </svg>
              2094/9 kb
            </StatusCell>
          </StatusBar>
        </Window>
      </Page>
    </>
  );
}
